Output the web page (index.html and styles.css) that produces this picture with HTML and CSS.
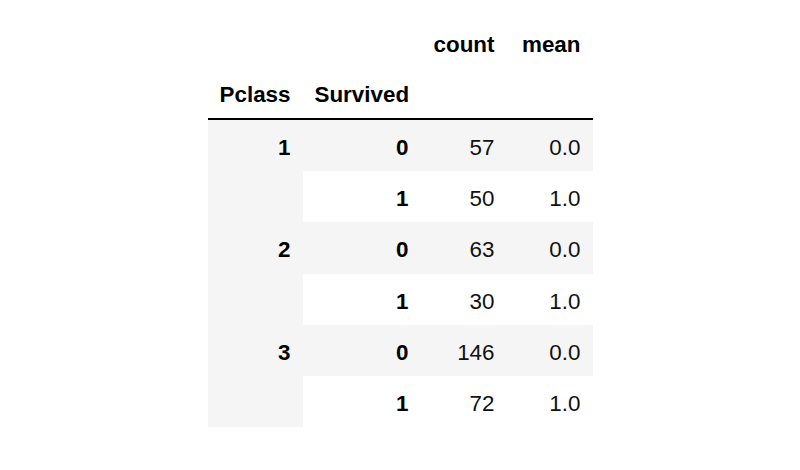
FILE: index.html
```html
<!DOCTYPE html>
<html>
<head>
<meta charset="utf-8">
<link rel="stylesheet" href="styles.css">
</head>
<body>
<div class="page">
<table class="df">
  <colgroup>
    <col class="w-pclass">
    <col class="w-surv">
    <col class="w-num">
    <col class="w-num">
  </colgroup>
  <thead>
    <tr class="hrow">
      <th></th>
      <th></th>
      <th>count</th>
      <th>mean</th>
    </tr>
    <tr class="hrow hlast">
      <th>Pclass</th>
      <th>Survived</th>
      <th></th>
      <th></th>
    </tr>
  </thead>
  <tbody>
    <tr class="odd"><th rowspan="2" class="span">1</th><th>0</th><td>57</td><td>0.0</td></tr>
    <tr class="even"><th>1</th><td>50</td><td>1.0</td></tr>
    <tr class="odd"><th rowspan="2" class="span">2</th><th>0</th><td>63</td><td>0.0</td></tr>
    <tr class="even"><th>1</th><td>30</td><td>1.0</td></tr>
    <tr class="odd"><th rowspan="2" class="span">3</th><th>0</th><td>146</td><td>0.0</td></tr>
    <tr class="even"><th>1</th><td>72</td><td>1.0</td></tr>
  </tbody>
</table>
</div>
</body>
</html>
```

FILE: styles.css
```css
html, body {
  margin: 0;
  padding: 0;
  background: #ffffff;
}
.page {
  display: flex;
  justify-content: center;
  padding-top: 19px;
}
.df {
  border-collapse: collapse;
  border-spacing: 0;
  table-layout: fixed;
  width: 385px;
  font-family: "Liberation Sans", Arial, Helvetica, sans-serif;
  font-size: 22.4px;
  color: #000;
}
.w-pclass { width: 95px; }
.w-surv { width: 118px; }
.w-num { width: 86px; }
.df th, .df td {
  padding: 0 12px;
  text-align: right;
  vertical-align: middle;
  white-space: nowrap;
}
.df th {
  font-weight: bold;
}
.hrow th {
  height: 50px;
  padding-top: 2px;
  box-sizing: border-box;
}
.hlast th {
  border-bottom: 2px solid #000;
}
.df tbody th,
.df tbody td {
  height: 51.2px;
  padding-top: 4px;
  line-height: 47.2px;
  box-sizing: border-box;
  color: #111;
}
.df tbody th {
  color: #000;
}
.df tbody th.span {
  vertical-align: top;
}
.odd { background: #f5f5f5; }
.even { background: #ffffff; }
```
